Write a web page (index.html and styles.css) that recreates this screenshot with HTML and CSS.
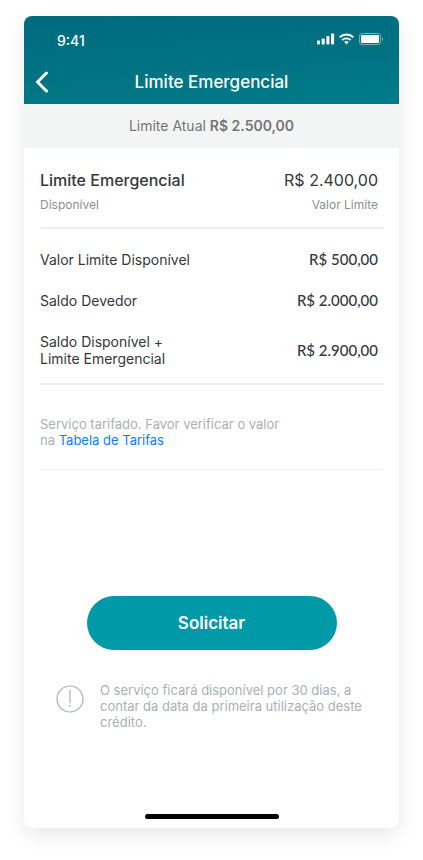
FILE: index.html
```html
<!DOCTYPE html>
<html lang="pt-BR">
<head>
<meta charset="utf-8">
<meta name="viewport" content="width=device-width, initial-scale=1">
<title>Limite Emergencial</title>
<link rel="stylesheet" href="styles.css">
</head>
<body>
<div class="phone">
  <header class="top">
    <div class="status">
      <span>9:41</span>
      <svg class="status-icons" width="67" height="12" viewBox="0 0 67 12" fill="#fff" aria-hidden="true">
        <rect x="0" y="7.5" width="3" height="4" rx=".8"/>
        <rect x="4.700" y="5.5" width="3" height="6" rx=".8"/>
        <rect x="9.400" y="3" width="3" height="8.500" rx=".8"/>
        <rect x="14.100" y=".5" width="3" height="11" rx=".8"/>
        <g fill="none" stroke="#fff" stroke-width="1.900">
          <path d="M22.700 4.300a9.700 9.700 0 0 1 13.600 0"/>
          <path d="M25.300 7.100a6 6 0 0 1 8.400 0"/>
        </g>
        <path d="M27.200 9a3.400 3.400 0 0 1 4.600 0L29.500 11.400z"/>
        <rect x="42.500" y=".5" width="21" height="11" rx="2.600" fill="none" stroke="#fff" stroke-opacity=".45"/>
        <rect x="44" y="2" width="18" height="8" rx="1.300"/>
        <path d="M65 4.200c1.500.6 1.500 3.100 0 3.700z" fill-opacity=".5"/>
      </svg>
    </div>
    <div class="nav">
      <button class="back" type="button" aria-label="Voltar">
        <svg width="14" height="22" viewBox="0 0 14 22" fill="none" stroke="#fff" stroke-width="3" stroke-linecap="round" stroke-linejoin="round" aria-hidden="true"><path d="M11.500 2 2.500 11l9 9"/></svg>
      </button>
      <h1>Limite Emergencial</h1>
    </div>
  </header>
  <p class="current">Limite Atual <strong>R$ 2.500,00</strong></p>
  <main>
    <section class="summary">
      <div class="line"><h2>Limite Emergencial</h2><span class="total">R$ 2.400,00</span></div>
      <div class="line caption"><span>Disponível</span><span>Valor Limite</span></div>
    </section>
    <dl class="details">
      <div class="line"><dt>Valor Limite Disponível</dt><dd>R$ 500,00</dd></div>
      <div class="line"><dt>Saldo Devedor</dt><dd>R$ 2.000,00</dd></div>
      <div class="line"><dt>Saldo Disponível +<br>Limite Emergencial</dt><dd>R$ 2.900,00</dd></div>
    </dl>
    <p class="fees">Serviço tarifado. Favor verificar o valor<br>na <a href="#tarifas">Tabela de Tarifas</a></p>
    <button class="request" type="button">Solicitar</button>
    <div class="notice">
      <svg width="28" height="28" viewBox="0 0 28 28" fill="none" stroke="#a9afb8" stroke-width="1.200" aria-hidden="true"><circle cx="14" cy="14" r="13"/><path d="M14 5v13M14 20v2"/></svg>
      <p>O serviço ficará disponível por 30 dias, a<br>contar da data da primeira utilização deste<br>crédito.</p>
    </div>
  </main>
  <div class="home"></div>
</div>
</body>
</html>
```
FILE: styles.css
```css
* {
  box-sizing: border-box;
}

body {
  margin: 0;
  min-height: 100vh;
  padding: 16px 24px 32px;
  display: flex;
  background: #fff;
  color: #36373b;
  font-family: Inter, "Liberation Sans", sans-serif;
}

h1, h2, p, dl, dt, dd {
  margin: 0;
  font-weight: 400;
}

button {
  border: 0;
  padding: 0;
  background: none;
  color: #fff;
  font: inherit;
  cursor: pointer;
}

.phone {
  flex: 1;
  min-width: 0;
  display: flex;
  flex-direction: column;
  border-radius: 8px;
  overflow: hidden;
  background: #fff;
  box-shadow: 0 7px 20px rgba(0, 0, 0, .09);
}

.top {
  background: linear-gradient(176deg, #006a7e, #007b88);
  color: #fff;
}

.status {
  height: 44px;
  padding: 4px 15px 0 33px;
  display: flex;
  align-items: center;
  justify-content: space-between;
  font-size: 14px;
  font-weight: 500;
}

.status-icons {
  margin-bottom: 2px;
}

.nav {
  height: 44px;
  display: grid;
  grid-template-columns: 36px 1fr 36px;
  align-items: center;
}

.back {
  display: flex;
  justify-content: center;
}

.nav h1 {
  font-size: 17px;
  font-weight: 500;
  text-align: center;
}

.current {
  background: #f3f5f5;
  color: #737479;
  font-size: 14px;
  line-height: 44px;
  text-align: center;
}

.current strong {
  font-weight: 600;
}

main {
  flex: 1;
  padding: 0 16px;
  display: flex;
  flex-direction: column;
}

.line {
  display: flex;
  align-items: center;
  justify-content: space-between;
  padding-right: 6px;
}

.summary,
.details {
  margin-right: -1px;
  border-bottom: 2px solid #e9edf1;
}

.summary {
  padding: 20px 0 14px;
}

.summary h2,
.total {
  font-size: 16px;
  line-height: 24px;
}

.summary h2 {
  font-weight: 500;
}

.caption {
  color: #8c8e95;
  font-size: 12px;
  line-height: 16px;
  padding-top: 5px;
}

.details {
  padding: 22px 0 16px;
  display: grid;
  gap: 24px;
  font-size: 14px;
  line-height: 17px;
}

.details dd {
  font-family: Lato, "Liberation Sans", sans-serif;
  font-size: 15px;
  font-weight: 500;
}

.fees {
  padding: 31px 0 21px;
  border-bottom: 1px solid #eaecee;
  color: #a9afb8;
  font-size: 13px;
  line-height: 16px;
}

.fees a {
  color: #0a7cff;
  text-decoration: none;
}

.request {
  width: 250px;
  max-width: 100%;
  height: 54px;
  margin: 126px auto 32px;
  border-radius: 27px;
  background: #0099a8;
  font-size: 17px;
  font-weight: 600;
}

.notice {
  display: flex;
  gap: 16px;
  padding-left: 16px;
  color: #a9afb8;
  font-size: 13px;
  line-height: 16px;
}

.notice svg {
  flex: none;
  margin-top: 3px;
}

.home {
  width: 134px;
  height: 5px;
  margin: 0 auto 9px;
  border-radius: 3px;
  background: #000;
}
```
